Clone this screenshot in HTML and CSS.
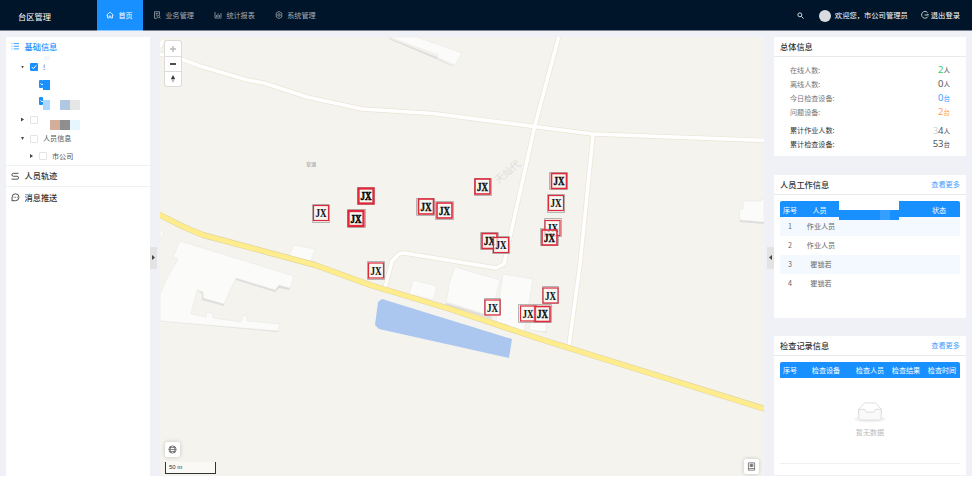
FILE: index.html
```html
<!DOCTYPE html>
<html lang="zh-CN">
<head>
<meta charset="utf-8">
<title>台区管理</title>
<link rel="stylesheet" href="styles.css">
</head>
<body>
<div class="app">
  <header class="topbar">
    <div class="brand">台区管理</div>
    <nav class="menu">
      <a class="menu-item active"><svg class="ico" viewBox="0 0 16 16"><path d="M1 8.500 8 2l7 6.500M3 7.500V14h3.500v-4h3v4H13V7.500"/></svg>首页</a>
      <a class="menu-item second"><svg class="ico" viewBox="0 0 16 16"><path d="M8 14.500H3v-13h10v6M5.500 5h5M5.500 8h3"/><circle cx="11" cy="11" r="2.500"/><path d="m13 13 2 2"/></svg>业务管理</a>
      <a class="menu-item third"><svg class="ico" viewBox="0 0 16 16"><path d="M2 2v12h13M5 12V8m3 4V5m3 7V8m3 4V4"/></svg>统计报表</a>
      <a class="menu-item fourth"><svg class="ico" viewBox="0 0 16 16"><path d="m8 1 5.500 3v8L8 15l-5.500-3V4z"/><circle cx="8" cy="8" r="2.500"/></svg>系统管理</a>
    </nav>
    <div class="user">
      <svg class="ico search" viewBox="0 0 16 16"><circle cx="6.500" cy="6.500" r="4.500"/><path d="m10 10 5 5"/></svg>
      <span class="avatar"></span>
      <span class="hello">欢迎您，市公司管理员</span>
      <svg class="ico" viewBox="0 0 16 16"><path d="M13 3A6.800 6.800 0 1 0 14 11M7 8h8m-2.500-2.500L15 8"/></svg>
      <span class="logout">退出登录</span>
    </div>
  </header>

  <main class="content">
    <aside class="sidebar">
      <h2 class="side-title current"><svg class="side-ico" viewBox="0 0 16 16"><path d="M5 3h10M5 8h10M5 13h10M1 3h1.500M1 8h1.500M1 13h1.500"/></svg>基础信息</h2>
      <div class="tree">
        <div class="node n1"><i class="caret down"></i><span class="check on"><svg viewBox="0 0 8 8"><path d="m1.800 4 1.600 1.700 2.900-3.400"/></svg></span><span class="label">!</span><i class="tint"></i></div>
        <div class="node n2"><span class="check on half"><svg viewBox="0 0 8 8"><path d="m1.500 3.500 1.500 1.300 2-1.500"/></svg></span><i class="block solid"></i></div>
        <div class="node n3"><span class="check on half"><svg viewBox="0 0 8 8"><path d="m1.500 3.500 1.500 1.300 2-1.500"/></svg></span><i class="block pale"></i><i class="block steel"></i><i class="block grey"></i></div>
        <div class="node n4"><i class="caret right"></i><span class="check"></span><i class="block tan"></i><i class="block dark"></i><i class="block ice"></i></div>
        <div class="node n5"><i class="caret down"></i><span class="check"></span><span class="label">人员信息</span></div>
        <div class="node n6"><i class="caret right"></i><span class="check"></span><span class="label">市公司</span></div>
      </div>
      <h2 class="side-title"><svg class="side-ico" viewBox="0 0 16 16"><path d="M14 2.500H4.500a2.700 2.700 0 0 0 0 5.500h7a2.700 2.700 0 0 1 0 5.500H1"/></svg>人员轨迹</h2>
      <h2 class="side-title"><svg class="side-ico" viewBox="0 0 16 16"><path d="M2 15V8a6.500 6.500 0 1 1 6.500 6.500H2M5 8h1.500M8 8h1.500M11 8h1.500"/></svg>消息推送</h2>
    </aside>

    <div class="gutter"><span class="handle"><i class="caret right"></i></span></div>

    <section class="map">
      <svg class="map-canvas" viewBox="160 37 604 439">
        <defs>
          <g id="pin">
            <rect class="pin-frame" x="-7.500" y="-7.500" width="15" height="15"/>
            <text class="pin-text" x="-5.500" y="4.300" textLength="11" lengthAdjust="spacingAndGlyphs">JX</text>
          </g>
        </defs>
        <g class="buildings">
          <path class="shade" d="m389 38 48 19 1 2 16 7-2 0-16-7-47-20z"/>
          <path d="M389 37h28l45 16-7 12-17-7v-3z"/>
          <path class="shade" d="m160 318 118 11v3l-118-11zM236 278l39 12 4-5 11 3-1 2-10-2-4 4-39-12zM197 290l6 2v6l21 6v2l-22-6v-6zM446 303l46 14v2l-46-14zM530 328l17 3v2l-17-3zM740 220l24 2v2l-24-2z"/>
          <path d="m180 241 114 35-4 12-11-3-4 5-39-12-12 26-21-6v-6l-6-2-6 24 15 3 1-5 6 2v4l28 4 2-7 4 1v5l33 3-2 7-118-10v-27l6-14 12-21-5-2z"/>
          <path d="m294 245 21 4-5 14-22-6z"/>
          <path d="m413 280 24 6-4 14-24-6z"/>
          <path d="m455 267 45 13-9 36-45-14 3-15-1-1z"/>
          <path d="m503 274 30 5-9 53-28-10z"/>
          <path d="m532 311 15 3-1 18-17-2z"/>
          <path d="M764 199h-3v2h-18v8l-4 1 1 10 24 2z"/>
          <path d="m160 230 4 3-4 6zm0 17 3 3-3 3z"/>
        </g>
        <path class="water" d="m382 299 130 40-3 19-130-29-4-4 3-23z"/>
        <g class="road-edge">
          <path d="M158 53.500 181 59 200 66 247 80 264 83 307 97 362 109 433 113.500 534 126.500 593 134 766 140.500"/>
          <path d="m559 36-24 89-31 139-8 4-92-15-5 1-7 7-7 27"/>
          <path d="m593 135-13 130-11 80"/>
          <path d="m160 47 3-7"/>
        </g>
        <g class="road">
          <path d="M158 53.500 181 59 200 66 247 80 264 83 307 97 362 109 433 113.500 534 126.500 593 134 766 140.500"/>
          <path d="m559 36-24 89-31 139-8 4-92-15-5 1-7 7-7 27"/>
          <path d="m593 135-13 130-11 80"/>
          <path d="m160 47 3-7"/>
        </g>
        <path class="highway-edge" d="m156 213 28 14 19 8 112 30 55 20 80 24 90 30 225 70"/>
        <path class="highway" d="m156 213 28 14 19 8 112 30 55 20 80 24 90 30 225 70"/>
        <text class="place" x="306" y="166">草湖</text>
        <text class="street" transform="translate(498 184) rotate(-39)">天灿代</text>
        <g class="echo">
          <path d="M312.500 204.500h17v18h-17zM357.500 187.500h17v17h-17zM347.500 209.500h18v18h-18zM416.500 198.500h18v17h-18zM435.500 201.500h18v18h-18zM474.500 178.500h17v17h-17zM549.500 172.500h18v17h-18zM547.500 194.500h17v18h-17zM544.500 218.500h17v18h-17zM540.500 228.500h18v17h-18zM480.500 232.500h18v17h-18zM492.500 236.500h17v17h-17zM367.500 261.500h17v18h-17zM484.500 298.500h16v16h-16zM542.500 286.500h16v17h-16zM518.500 304.500h18v18h-18zM533.500 304.500h18v18h-18z"/>
        </g>
        <g class="pins">
          <use href="#pin" x="321" y="213"/>
          <use class="heavy" href="#pin" x="366" y="196"/>
          <use class="heavy" href="#pin" x="356" y="218.500"/>
          <use class="medium" href="#pin" x="426" y="206.500"/>
          <use class="medium" href="#pin" x="444.500" y="210.500"/>
          <use class="medium" href="#pin" x="482.500" y="186.500"/>
          <use class="medium" href="#pin" x="559" y="181"/>
          <use href="#pin" x="556" y="203"/>
          <use href="#pin" x="552.500" y="228"/>
          <use class="medium" href="#pin" x="549.500" y="237.500"/>
          <use class="medium" href="#pin" x="489.500" y="241"/>
          <use href="#pin" x="501" y="245"/>
          <use href="#pin" x="376" y="270.500"/>
          <use href="#pin" x="492.500" y="307.500"/>
          <use href="#pin" x="550.500" y="295.500"/>
          <use href="#pin" x="528" y="313.500"/>
          <use class="medium" href="#pin" x="542.500" y="314"/>
        </g>
      </svg>
      <div class="zoom-ctl">
        <span><svg viewBox="0 0 8 8"><path class="plus" d="M1 4h6M4 1v6"/></svg></span>
        <span><svg viewBox="0 0 8 8"><path class="minus" d="M1 4h6"/></svg></span>
        <span><svg viewBox="0 0 8 8"><path class="north" d="m4 0 2 4H2z"/><path class="south" d="m4 8 2-4H2z"/></svg></span>
      </div>
      <div class="map-btn globe"><svg viewBox="0 0 16 16"><circle cx="8" cy="8" r="6.500"/><path d="M1.500 8h13M3 4.500h10M3 11.500h10M6 2c-3 4-3 8 0 12M10 2c3 4 3 8 0 12"/></svg></div>
      <div class="scale">50 m</div>
      <div class="map-btn legend"><svg viewBox="0 0 16 16"><path d="M2.500 1.500h11v13h-11zM2.500 11.500h11M5.500 4h5v4h-5zM8 4v4M5.500 6h5"/></svg></div>
    </section>

    <div class="gutter right"><span class="handle"><i class="caret left"></i></span></div>

    <aside class="panels">
      <section class="card overview">
        <h3>总体信息</h3>
        <dl>
          <div><dt>在线人数:</dt><dd class="green"><b>2</b><span>人</span></dd></div>
          <div><dt>离线人数:</dt><dd><b>0</b>人</dd></div>
          <div><dt>今日检查设备:</dt><dd class="blue"><b>0</b>台</dd></div>
          <div><dt>问题设备:</dt><dd class="orange"><b>2</b>台</dd></div>
          <div class="total first"><dt>累计作业人数:</dt><dd><b><i>3</i>4</b>人</dd></div>
          <div class="total"><dt>累计检查设备:</dt><dd><b>53</b>台</dd></div>
        </dl>
      </section>
      <section class="card work">
        <h3>人员工作信息<a>查看更多</a></h3>
        <div class="table">
          <div class="row head"><span>序号</span><span>人员</span><span class="cover"><i></i></span><span class="status">状态</span></div>
          <div class="row odd"><span>1</span><span>作业人员</span></div>
          <div class="row"><span>2</span><span>作业人员</span></div>
          <div class="row odd"><span>3</span><span>瞿锁若</span></div>
          <div class="row"><span>4</span><span>瞿锁若</span></div>
        </div>
      </section>
      <section class="card records">
        <h3>检查记录信息<a>查看更多</a></h3>
        <div class="table">
          <div class="row head"><span>序号</span><span>检查设备</span><span>检查人员</span><span>检查结果</span><span>检查时间</span></div>
          <div class="empty">
            <svg viewBox="0 0 64 41"><ellipse class="floor" cx="32" cy="33" rx="32" ry="7"/><path class="lid" d="M55 12.800 44.900 1.300C44.400.5 43.700 0 42.900 0H21.100c-.8 0-1.500.5-2 1.300L9 12.800V22h46z"/><path class="tray" d="M41.600 15.900c0-1.600 1-2.900 2.200-2.900H55v18.100c0 2.200-1.300 3.900-3 3.900H12c-1.700 0-3-1.700-3-3.900V13h11.200c1.200 0 2.200 1.300 2.200 2.900s1 3 2.200 3h14.800c1.200 0 2.200-1.400 2.200-3z"/></svg>
            <p>暂无数据</p>
          </div>
        </div>
      </section>
    </aside>
  </main>
</div>
</body>
</html>
```
FILE: styles.css
```css
* { box-sizing: border-box; }

body {
  margin: 0;
  background: #fff;
  color: #333;
  font: 7.1px/1.2 "Noto Sans CJK SC", sans-serif;
  overflow: hidden;
}

i { font-style: normal; }
h2, h3, p, dl, dd { margin: 0; }

.app { width: 972px; height: 476px; background: #eff1f6; }

/* Top bar */
.topbar {
  display: flex;
  height: 31px;
  background: #001529;
  border-bottom: 1px solid #7d8491;
  color: #fff;
}
.brand { width: 97px; padding: 11px 0 0 18px; font-size: 8.25px; line-height: 11px; }
.menu { display: flex; }
.menu-item { display: flex; align-items: center; gap: 4.500px; color: #a5adb5; }
.menu-item.active { width: 46px; height: 31px; padding-left: 9px; background: #1890ff; color: #fff; border-bottom: 1px solid #8cc7ff; }
.ico { width: 8px; height: 8px; fill: none; stroke: currentColor; stroke-width: 1.5; }
.second { margin-left: 10px; }
.third { margin-left: 20px; }
.fourth { margin-left: 20px; }
.user { display: flex; align-items: center; margin-left: auto; padding-right: 12px; font-size: 7.3px; }
.search { width: 7px; height: 7px; margin-right: 15px; stroke-width: 1.9; }
.avatar { width: 12px; height: 12px; border-radius: 50%; background: #d8dbdf; margin: 2px 4px 0 0; }
.hello { margin-right: 13px; }
.logout { margin-left: 2px; }

.content { display: flex; height: 445px; padding: 6px 6px 0; }

/* Sidebar */
.sidebar { width: 144px; height: 439px; background: #fff; }
.side-title {
  display: flex;
  align-items: center;
  gap: 5px;
  height: 21px;
  padding-left: 5px;
  border-bottom: 1px solid #eff0f3;
  font-size: 8.2px;
  font-weight: 500;
}
.side-title.current { height: 19px; border: 0; color: #1890ff; }
.side-title:last-child { border: 0; }
.side-ico { width: 8.5px; height: 8.5px; fill: none; stroke: currentColor; stroke-width: 1.6; }
.tree { height: 110px; border-bottom: 1px solid #eff0f3; color: #555; }
.node { display: flex; align-items: center; position: relative; }
.n1 { height: 22px; padding-left: 15px; }
.n2 { height: 14px; padding-left: 33px; }
.n3 { height: 20px; padding-left: 33px; }
.n4 { height: 15px; padding-left: 15px; }
.n5 { height: 23px; padding-left: 15px; }
.n6 { height: 12px; padding-left: 24px; }
.caret { display: block; width: 3px; height: 3px; background: #444; }
.caret.down { clip-path: polygon(0 0, 100% 0, 50% 100%); }
.caret.right { clip-path: polygon(0 0, 100% 50%, 0 100%); }
.caret.left { clip-path: polygon(100% 0, 0 50%, 100% 100%); }
.node .caret.right { height: 4px; }
.check { width: 8px; height: 8px; margin: 0 5px 0 6px; border: 1px solid #e2e4e8; border-radius: 1px; }
.check.on { border: 0; background: #1890ff; }
.check svg { display: block; width: 8px; height: 8px; fill: none; stroke: #fff; }
.check.half { width: 4px; margin: -3px 0 0; overflow: hidden; }
.tint { position: absolute; left: 38px; top: 0; width: 6px; height: 4px; background: #eff8ff; }
.block { width: 10px; height: 10px; }
.n2 .block, .n3 .block.pale { width: 7px; }
.n3 .block { margin-top: 6px; }
.n4 .block { margin-top: 11px; }
.solid { background: #1890ff; }
.pale { background: #aed8ff; margin-right: 10px; }
.steel { background: #b0c8e1; }
.grey { background: #e6e6e6; }
.tan { margin-left: 7px; background: #d2ae9b; }
.dark { background: #8e8e8e; }
.ice { background: #e6f6ff; }

/* Collapse handles beside the map */
.gutter { display: flex; align-items: center; width: 10px; }
.gutter.right { justify-content: flex-end; }
.handle { display: grid; place-items: center; width: 7px; height: 22px; margin-top: 2px; background: #e3e3e3; }
.handle .caret { height: 5px; }

/* Map */
.map { position: relative; width: 604px; height: 439px; background: #f5f3ee; }
.map-canvas { display: block; width: 604px; height: 439px; }
.buildings { fill: #fbfbfa; stroke: #e9e8e6; stroke-width: .6; }
.shade { fill: #dedddb; stroke: none; }
.water { fill: #abc6ef; }
.road-edge, .road, .highway-edge, .highway { fill: none; stroke-linejoin: round; }
.road-edge { stroke: #ebe5d3; stroke-width: 5; }
.road { stroke: #fff; stroke-width: 3.6; }
.highway-edge { stroke: #ded5a1; stroke-width: 6; }
.highway { stroke: #ffec8c; stroke-width: 4.7; }
.place { fill: #8b8b8b; font-size: 5px; }
.street { fill: #deded9; font-size: 10px; }
.echo { fill: none; stroke: #b4b4b4; }
.pins { --frame: 1.2px; --ink: .1px; }
.pin-frame { fill: rgba(248, 246, 244, .7); stroke: #dc2a3b; stroke-width: var(--frame); }
.pin-text { fill: #111; stroke: #000; stroke-width: var(--ink); font: 700 12px "Liberation Serif", serif; }
.medium { --frame: 1.6px; --ink: .4px; }
.heavy { --frame: 2.3px; --ink: .6px; }

.zoom-ctl { position: absolute; left: 5px; top: 4px; width: 16px; border-radius: 2px; background: #fff; box-shadow: 0 0 0 1px #dcdbd7; }
.zoom-ctl span { display: grid; place-items: center; height: 15px; border-bottom: 1px solid #ddd; }
.zoom-ctl span:first-child { height: 16px; }
.zoom-ctl span:last-child { height: 14px; border: 0; }
.zoom-ctl svg { width: 8px; height: 8px; }
.plus { stroke: #b9b9b9; stroke-width: 1.4; }
.minus { stroke: #222; stroke-width: 1.6; }
.north { fill: #333; }
.south { fill: #bbb; }
.map-btn { position: absolute; display: grid; place-items: center; width: 15px; height: 15px; border-radius: 2px; background: #fff; box-shadow: 0 0 4px rgba(0, 0, 0, .2); }
.map-btn svg { width: 9px; height: 9px; fill: none; stroke: #666; stroke-width: 1.4; }
.globe { left: 5px; top: 405px; }
.legend { left: 584px; top: 422px; }
.scale { position: absolute; left: 5px; top: 425px; width: 51px; height: 12px; padding-left: 3px; border: 1px solid #333; border-top: 0; background: #faf9f6; font: 6px/11px "Liberation Sans", sans-serif; }

/* Right column */
.panels { width: 192px; }
.card { background: #fff; border-radius: 1px; }
.card h3 { display: flex; justify-content: space-between; align-items: center; height: 20px; padding: 0 6px; border-bottom: 1px solid #e9eaed; font-size: 8.2px; font-weight: 500; }
.card h3 a { color: #3d9dff; font-size: 7.2px; font-weight: 400; }
.overview { height: 119px; margin-bottom: 19px; }
.overview dl { padding: 6.500px 16px 0; }
.overview dl div { display: flex; justify-content: space-between; align-items: center; height: 13.8px; color: #777; }
.overview dd { display: flex; align-items: baseline; color: #555; font-size: 6.5px; }
.overview b { font: 9.5px/12px "Noto Sans", sans-serif; }
.overview b i { color: #c9d5d9; }
.overview .green b { color: #3fcb62; }
.overview dd.blue { color: #409eff; }
.overview dd.orange { color: #ffa24d; }
.overview dl .total { color: #333; }
.overview dl .first { margin-top: 5px; }
.work { height: 143px; margin-bottom: 18px; }
.records { height: 139px; }
.table { padding: 6px 6px 0; }
.row { display: grid; grid-template-columns: 20px 42px 60px 1fr; align-items: center; height: 19px; text-align: center; color: #666; }
.row.head { height: 16px; border-radius: 2px 2px 0 0; background: #1890ff; color: #fff; }
.work .row.odd { background: #f3f9ff; }
.work .head { grid-template-columns: 20px 39px 60px 1fr; }
.cover { align-self: start; height: 19px; border-top: 9px solid #fff; background: #1890ff; position: relative; }
.cover i { position: absolute; left: 41px; top: 0; width: 10px; height: 10px; background: #359fff; }
.status { padding-left: 19px; }
.records .head { grid-template-columns: 20px 52px 36px 36px 36px; }
.empty { height: 86px; padding-top: 25px; border-bottom: 1px solid #eeeff1; text-align: center; color: #bbb; }
.empty svg { display: block; width: 32px; height: 20px; margin: 0 auto 5px; overflow: visible; }
.floor { fill: #f3f3f3; }
.lid { fill: #fff; stroke: #d0d0d0; stroke-width: 1.4; }
.tray { fill: #fafafa; stroke: #d0d0d0; stroke-width: 1.4; }
```
